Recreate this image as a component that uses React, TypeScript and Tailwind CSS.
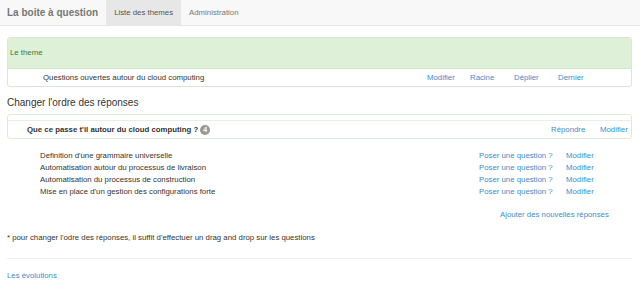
import React from 'react';

const link = 'text-[#428bca]';

const reponses = [
  "Definition d'une grammaire universelle",
  'Automatisation autour du processus de livraison',
  'Automatisation du processus de construction',
  "Mise en place d'un gestion des configurations forte",
];

export default function App() {
  return (
    <div className="w-[640px] h-[307px] bg-white text-[#333] text-[7.8px] leading-[12px] font-['Liberation_Sans',Arial,sans-serif] overflow-hidden">
      {/* navbar */}
      <div className="h-[26px] bg-[#f8f8f8] border-b border-[#e7e7e7] flex items-stretch pl-[7px]">
        <div className="flex items-center text-[10px] font-bold text-[#777] pr-[8px]">La boite à question</div>
        <div className="flex items-center bg-[#e7e7e7] text-[#555] px-[8px]">Liste des themes</div>
        <div className="flex items-center text-[#777] px-[8px]">Administration</div>
      </div>

      <div className="pl-[7px] pr-[8px]">
        {/* panel theme */}
        <div className="mt-[11px] border border-[#dae8d0] rounded-[3px] overflow-hidden">
          <div className="h-[31px] bg-[#dff0d8] text-[#3c763d] border-b border-[#d6e9c6] flex items-center pl-[2px]">
            Le theme
          </div>
          <div className="h-[17px] flex items-center">
            <div className="pl-[35px] flex-1">Questions ouvertes autour du cloud computing</div>
            <div className={`flex ${link}`}>
              <span className="w-[43px]">Modifier</span>
              <span className="w-[44px]">Racine</span>
              <span className="w-[44px]">Déplier</span>
              <span className="w-[73px]">Dernier</span>
            </div>
          </div>
        </div>

        <h2 className="mt-[9px] text-[10px] leading-[14px] font-normal">Changer l'ordre des réponses</h2>

        {/* panel question */}
        <div className="mt-[4px] border border-[#e0ead8] rounded-[3px] overflow-hidden">
          <div className="h-[6px] border-b border-[#e8eee4]"></div>
          <div className="h-[17px] flex items-center">
            <div className="pl-[19px] flex-1 flex items-center font-bold">
              Que ce passe t'il autour du cloud computing ?
              <span className="ml-[2px] w-[10px] h-[10px] rounded-full bg-[#999] text-white text-[7px] leading-[10px] text-center">4</span>
            </div>
            <div className={`flex ${link}`}>
              <span className="w-[49px]">Répondre</span>
              <span className="w-[31px]">Modifier</span>
            </div>
          </div>
        </div>

        {/* reponses */}
        <div className="mt-[11px] flex flex-col">
          {reponses.map((r) => (
            <div key={r} className="flex">
              <div className="pl-[33px] w-[472px]">{r}</div>
              <div className={`w-[87px] ${link}`}>Poser une question ?</div>
              <div className={link}>Modifier</div>
            </div>
          ))}
        </div>

        <div className={`mt-[11px] pl-[493px] ${link}`}>Ajouter des nouvelles réponses</div>

        <div className="mt-[11px]">* pour changer l'odre des réponses, il suffit d'effectuer un drag and drop sur les questions</div>

        <div className="mt-[14px] border-t border-[#eee]"></div>

        <div className={`mt-[11px] ${link}`}>Les évolutions</div>
      </div>
    </div>
  );
}
